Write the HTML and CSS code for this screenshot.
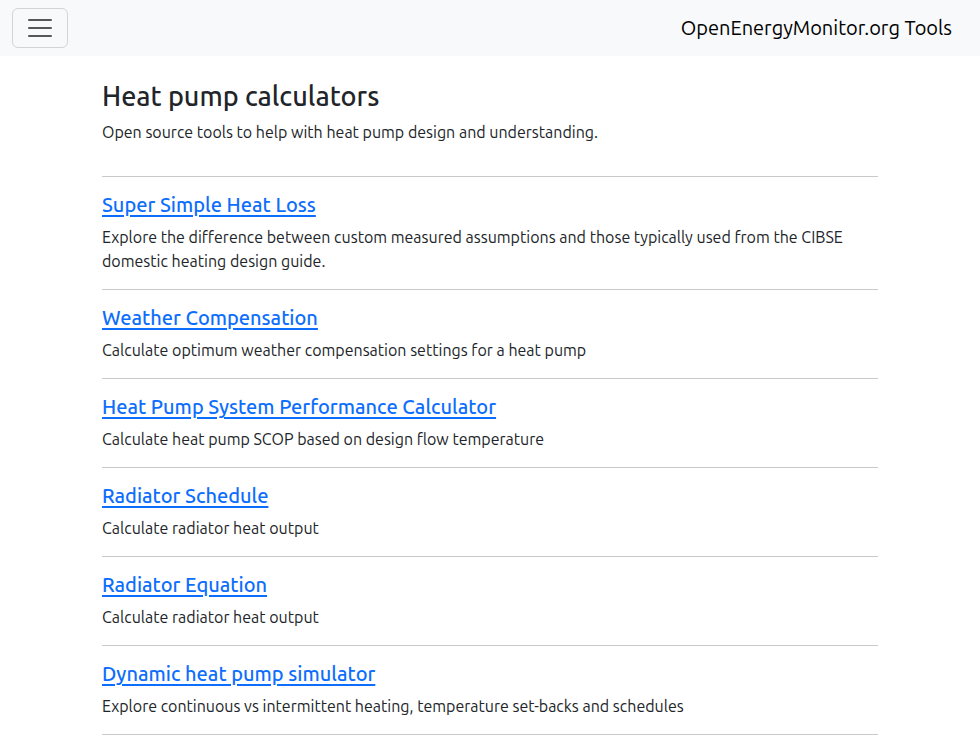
FILE: index.html
```html
<!DOCTYPE html>
<html lang="en">
<head>
<meta charset="utf-8">
<meta name="viewport" content="width=device-width, initial-scale=1">
<title>OpenEnergyMonitor.org Tools</title>
<link rel="stylesheet" href="styles.css">
</head>
<body>
<nav class="navbar">
  <button class="toggler" type="button" aria-label="Toggle navigation">
    <svg class="toggler-icon" viewBox="0 0 30 30" aria-hidden="true"><path d="M4 7h22M4 15h22M4 23h22"/></svg>
  </button>
  <a class="brand" href="#">OpenEnergyMonitor.org Tools</a>
</nav>
<main class="container">
  <h3 class="title">Heat pump calculators</h3>
  <p class="intro">Open source tools to help with heat pump design and understanding.</p>
  <section class="tool">
    <h5 class="tool-name"><a href="#">Super Simple Heat Loss</a></h5>
    <p class="text">Explore the difference between custom measured assumptions and those typically used from the CIBSE domestic heating design guide.</p>
  </section>
  <section class="tool">
    <h5 class="tool-name"><a href="#">Weather Compensation</a></h5>
    <p class="text">Calculate optimum weather compensation settings for a heat pump</p>
  </section>
  <section class="tool">
    <h5 class="tool-name"><a href="#">Heat Pump System Performance Calculator</a></h5>
    <p class="text">Calculate heat pump SCOP based on design flow temperature</p>
  </section>
  <section class="tool">
    <h5 class="tool-name"><a href="#">Radiator Schedule</a></h5>
    <p class="text">Calculate radiator heat output</p>
  </section>
  <section class="tool">
    <h5 class="tool-name"><a href="#">Radiator Equation</a></h5>
    <p class="text">Calculate radiator heat output</p>
  </section>
  <section class="tool last">
    <h5 class="tool-name"><a href="#">Dynamic heat pump simulator</a></h5>
    <p class="text">Explore continuous vs intermittent heating, temperature set-backs and schedules</p>
  </section>
</main>
</body>
</html>
```
FILE: styles.css
```css
* { box-sizing: border-box; }

body {
  margin: 0;
  background: #fff;
  color: #212529;
  font-family: Ubuntu, "Noto Sans", "Open Sans", sans-serif;
  font-size: 16px;
  font-weight: 400;
  line-height: 24px;
}

.navbar {
  display: flex;
  align-items: center;
  justify-content: space-between;
  padding: 8px 28px 8px 12px;
  background: #f8f9fa;
}

.toggler {
  display: flex;
  padding: 4px 12px;
  border: 1px solid #d3d4d5;
  border-radius: 6px;
  background: transparent;
}

.toggler-icon {
  width: 30px;
  height: 30px;
  fill: none;
  stroke: #000;
  stroke-opacity: 0.65;
  stroke-width: 2;
  stroke-linecap: round;
}

.brand {
  color: #000;
  font-size: 20px;
  line-height: 30px;
  text-decoration: none;
}

.container {
  max-width: 800px;
  margin: 0 auto;
  padding: 24px 12px 0;
}

.title {
  margin: 0 0 8px;
  font-size: 27px;
  font-weight: 500;
  line-height: 32px;
}

.intro {
  margin: 0 0 32px;
}

.tool {
  padding: 16px 0;
  border-top: 1px solid #c8c9ca;
}

.last {
  border-bottom: 1px solid #c8c9ca;
}

.tool-name {
  margin: 0 0 8px;
  font-size: 20px;
  font-weight: 500;
  line-height: 24px;
}

.tool-name a {
  color: #0d6efd;
  text-decoration-thickness: 2px;
  text-underline-offset: 3px;
}

.text { margin: 0; }
```
